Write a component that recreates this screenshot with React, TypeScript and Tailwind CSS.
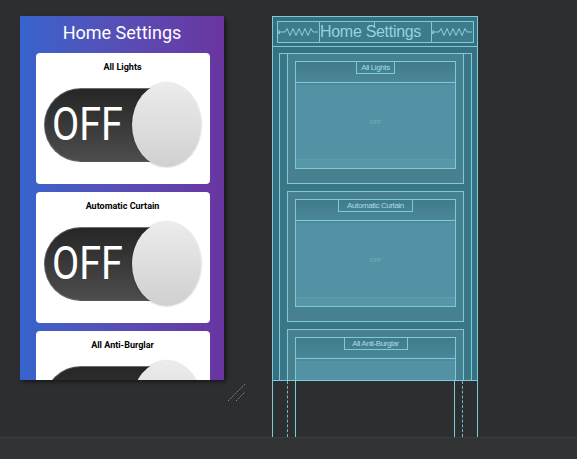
import React from "react";

const cards = ["All Lights", "Automatic Curtain", "All Anti-Burglar"];

function Switch() {
  return (
    <div className="relative w-[158px] h-[85px]">
      <div className="absolute left-0 top-[5px] w-[150px] h-[74px] rounded-full bg-gradient-to-b from-[#262626] to-[#4d4d4d] border border-[#9a9a9a]/40" />
      <div className="absolute left-[8px] top-[11px] origin-left scale-x-[0.86] text-white text-[46px] leading-[60px] font-['Roboto',sans-serif]">OFF</div>
      <div className="absolute left-[88px] top-0 w-[69px] h-[84px] rounded-[50%] bg-gradient-to-b from-[#ececec] to-[#d0d0d0] shadow-[0_0_2px_rgba(0,0,0,0.35)]" />
    </div>
  );
}

function PreviewCard({ title }: { title: string }) {
  return (
    <div className="shrink-0 w-[174px] h-[131px] bg-white rounded-[4px] px-[8px] pt-[8px] flex flex-col">
      <div className="h-[12px] flex items-center justify-center text-black text-[9px] font-bold leading-[12px]">{title}</div>
      <div className="h-[10px]" />
      <Switch />
    </div>
  );
}

function Spring() {
  return (
    <svg width="41" height="20" viewBox="0 0 41 20" className="block">
      <polyline
        points="1,8 1,12 1,10 7,10 9,6.5 12,13.5 15,6.5 18,13.5 21,6.5 24,13.5 27,6.5 30,13.5 33,6.5 35,10 40,10"
        fill="none"
        stroke="#86d4e3"
        strokeWidth="1"
      />
    </svg>
  );
}

function BlueCard({ title }: { title: string }) {
  const labelW = title === "All Lights" ? "w-[39px]" : title === "Automatic Curtain" ? "w-[75px]" : "w-[64px]";
  return (
    <div className="shrink-0 w-[177px] h-[131px] -mt-px border border-[#7ccbdb] bg-[#47808f] px-[7px] pt-[7px]">
      <div className="w-[161px] h-[108px] border border-[#7ccbdb] flex flex-col">
        <div className="h-[21px] border-b border-[#7ccbdb] bg-gradient-to-b from-[#417b8a] to-[#4a8798] flex justify-center">
          <div className={`${labelW} h-[13px] -mt-px border border-[#7ccbdb] flex items-center justify-center text-[8px] leading-[10px] text-[#a6dbe6] font-['Liberation_Sans',sans-serif] tracking-[-0.4px] whitespace-nowrap overflow-hidden`}>
            {title}
          </div>
        </div>
        <div className="flex-1 bg-[#5392a4] flex flex-col">
          <div className="h-[2px] bg-[#4d8a9c]" />
          <div className="flex-1 flex items-center justify-center text-[6px] text-[#77b0bf] font-['Liberation_Sans',sans-serif]">OFF</div>
          <div className="h-[9px] bg-[#5797a8] border-t border-[#5b9bac]" />
        </div>
      </div>
    </div>
  );
}

export default function App() {
  return (
    <div className="w-[577px] h-[459px] bg-[#2d2e30] flex flex-col overflow-hidden font-['Roboto',sans-serif]">
      <div className="relative flex-1">
        {/* Design preview */}
        <div className="absolute left-[20px] top-[16px] w-[204px] h-[364px] overflow-hidden bg-gradient-to-r from-[#3564cc] to-[#6934a0] shadow-[2px_2px_4px_rgba(0,0,0,0.5)] flex flex-col">
          <div className="h-[30px] shrink-0 flex items-center justify-center pt-[3px] text-white text-[18px] leading-[22px]">Home Settings</div>
          <div className="flex flex-col items-center gap-[8px] pt-[7px] pl-[1px]">
            {cards.map((c) => (
              <PreviewCard key={c} title={c} />
            ))}
          </div>
        </div>

        {/* Resize handle */}
        <svg className="absolute left-[226px] top-[382px]" width="22" height="22" viewBox="0 0 22 22">
          <line x1="2" y1="19" x2="19" y2="2" stroke="#8a8a8a" strokeWidth="1" strokeDasharray="1.5 1" />
          <line x1="10" y1="19" x2="19" y2="10" stroke="#8a8a8a" strokeWidth="1" strokeDasharray="1.5 1" />
        </svg>

        {/* Blueprint */}
        <div className="absolute left-[272px] top-[16px] w-[206px] flex flex-col">
          <div className="h-[365px] border border-[#7ccbdb] bg-[#377181] overflow-hidden flex flex-col">
            <div className="h-[30px] shrink-0 border-b border-[#7ccbdb] bg-[#36707f] pl-[4px] pt-[4px]">
              <div className="relative w-[197px] h-[22px] border border-[#7ccbdb] bg-[#3e7b8b] flex">
                <div className="w-[42px] border-r border-[#7ccbdb] flex items-center">
                  <Spring />
                </div>
                <div className="w-[112px] border-r border-[#7ccbdb] flex items-center text-[16px] leading-[20px] text-[#93d3e0] tracking-[-0.3px] font-['Liberation_Sans',sans-serif] whitespace-nowrap overflow-hidden">
                  Home Settings
                </div>
                <div className="flex-1 flex items-center">
                  <Spring />
                </div>
                <div className="absolute left-[96px] top-0 w-px h-[4px] bg-[#7ccbdb]" />
              </div>
            </div>
            <div className="flex-1 pl-[6px] pr-[5px] pt-[6px] flex">
              <div className="flex-1 border-l border-t border-r border-[#7ccbdb] bg-[#3a7686] pl-[7px] flex flex-col gap-[8px]">
                {cards.map((c) => (
                  <BlueCard key={c} title={c} />
                ))}
              </div>
            </div>
          </div>
          <div className="h-[56px] border-l border-r border-[#7ccbdb] px-[14px]">
            <div className="h-full border-l border-r border-dashed border-[#6fb8c8] px-[7px]">
              <div className="h-full border-l border-r border-[#7ccbdb]" />
            </div>
          </div>
        </div>
      </div>
      <div className="h-[22px] shrink-0 bg-[#313335] border-t border-[#3a3c3f]" />
    </div>
  );
}
